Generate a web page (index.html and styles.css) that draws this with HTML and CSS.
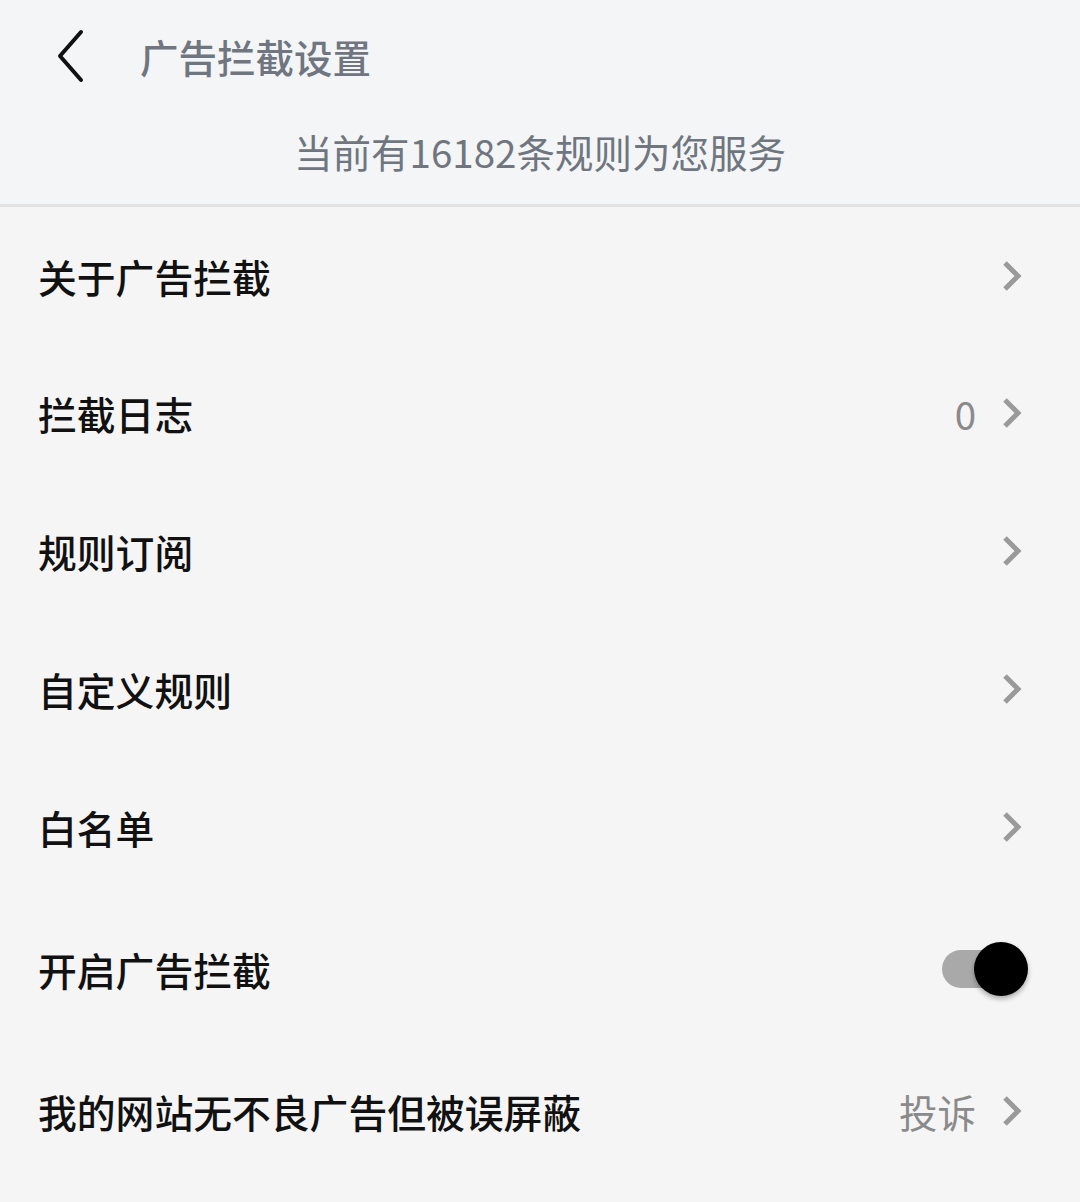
FILE: index.html
```html
<!DOCTYPE html>
<html lang="zh-CN">
<head>
    <meta charset="UTF-8">
    <meta name="viewport" content="width=device-width, initial-scale=1.0">
    <title>广告拦截设置</title>
    <link rel="stylesheet" href="styles.css">
</head>
<body>
    <header class="top">
        <div class="top-bar">
            <svg class="back" width="40" height="60" viewBox="0 0 40 60">
                <path d="M31 7 L10 31 L31 55" />
            </svg>
            <h1 class="title">广告拦截设置</h1>
        </div>
        <p class="rule-count">当前有16182条规则为您服务</p>
    </header>

    <ul class="settings">
        <li class="row">
            <span class="label">关于广告拦截</span>
            <span class="extra"><svg class="chev" viewBox="0 0 20 32"><path d="M3 3 L16 16 L3 29" /></svg></span>
        </li>
        <li class="row">
            <span class="label">拦截日志</span>
            <span class="extra"><span class="value">0</span><svg class="chev" viewBox="0 0 20 32"><path d="M3 3 L16 16 L3 29" /></svg></span>
        </li>
        <li class="row">
            <span class="label">规则订阅</span>
            <span class="extra"><svg class="chev" viewBox="0 0 20 32"><path d="M3 3 L16 16 L3 29" /></svg></span>
        </li>
        <li class="row">
            <span class="label">自定义规则</span>
            <span class="extra"><svg class="chev" viewBox="0 0 20 32"><path d="M3 3 L16 16 L3 29" /></svg></span>
        </li>
        <li class="row">
            <span class="label">白名单</span>
            <span class="extra"><svg class="chev" viewBox="0 0 20 32"><path d="M3 3 L16 16 L3 29" /></svg></span>
        </li>
        <li class="row row-tall">
            <span class="label">开启广告拦截</span>
            <span class="switch"><span class="knob"></span></span>
        </li>
        <li class="row">
            <span class="label">我的网站无不良广告但被误屏蔽</span>
            <span class="extra"><span class="value">投诉</span><svg class="chev" viewBox="0 0 20 32"><path d="M3 3 L16 16 L3 29" /></svg></span>
        </li>
    </ul>
</body>
</html>
```

FILE: styles.css
```css
body {
    margin: 0;
    background-color: #f5f5f5;
    font-family: "Noto Sans CJK SC", "Noto Sans", sans-serif;
    color: #111;
}
.top {
    background-color: #f4f5f6;
    border-bottom: 3px solid #e2e2e2;
    height: 204px;
}
.top-bar {
    display: flex;
    align-items: center;
    height: 112px;
    padding-left: 50px;
}
.back {
    display: block;
    margin-top: -2px;
}
.back path {
    fill: none;
    stroke: #111;
    stroke-width: 4;
    stroke-linecap: round;
    stroke-linejoin: round;
}
.title {
    margin: 0 0 0 50px;
    font-size: 38.5px;
    font-weight: 500;
    color: #6f7680;
}
.rule-count {
    margin: 12px 0 0;
    text-align: center;
    font-size: 38.5px;
    color: #6f7680;
    line-height: 54px;
}
.settings {
    list-style: none;
    margin: 0;
    padding: 0;
}
.row {
    display: flex;
    align-items: center;
    justify-content: space-between;
    height: 138px;
    padding: 0 58px 0 38px;
}
.row:first-child {
    height: 137px;
}
.row-tall {
    height: 146px;
}
.label {
    font-size: 38.8px;
    font-weight: 500;
}
.extra {
    display: flex;
    align-items: center;
    gap: 26px;
}
.value {
    font-size: 38.5px;
    color: #8a8a8a;
}
.chev {
    width: 20px;
    height: 32px;
    display: block;
}
.chev path {
    fill: none;
    stroke: #9a9a9a;
    stroke-width: 5;
}
.switch {
    position: relative;
    width: 60px;
    height: 38px;
    border-radius: 19px;
    background-color: #a9a9a9;
    margin-right: 20px;
}
.knob {
    position: absolute;
    left: 32px;
    top: -8px;
    width: 54px;
    height: 54px;
    border-radius: 50%;
    background-color: #000;
    box-shadow: 0 3px 5px rgba(0, 0, 0, 0.3);
}
```
